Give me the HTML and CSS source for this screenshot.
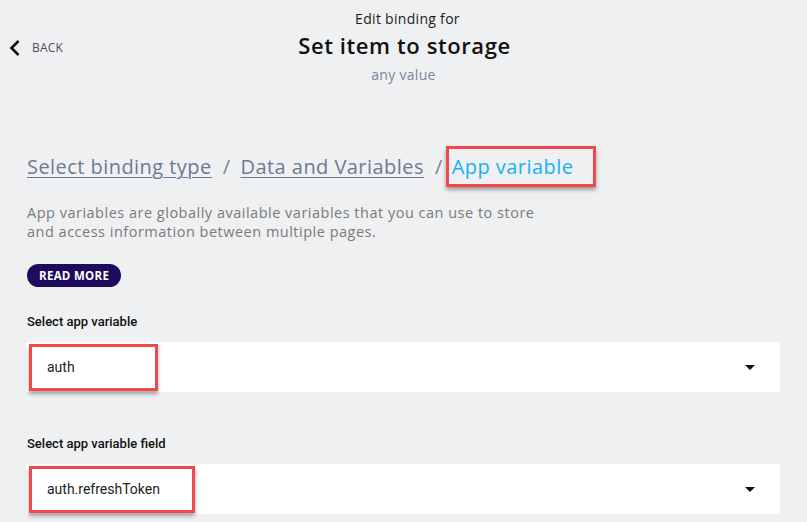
FILE: index.html
```html
<!DOCTYPE html>
<html>
<head>
<meta charset="utf-8">
<link rel="stylesheet" href="styles.css">
</head>
<body>
<div class="page">
  <header class="header">
    <a class="back">
      <svg class="chev" width="12" height="16" viewBox="0 0 12 16"><path d="M9.5 1 L2.5 8 L9.5 15" fill="none" stroke="#111" stroke-width="2.6"/></svg>
      <span>BACK</span>
    </a>
    <div class="titles">
      <div class="pre">Edit binding for</div>
      <div class="title">Set item to storage</div>
      <div class="sub">any value</div>
    </div>
  </header>
  <main class="content">
    <nav class="crumbs">
      <a class="crumb">Select binding type</a>
      <span class="sep">/</span>
      <a class="crumb">Data and Variables</a>
      <span class="sep">/</span>
      <span class="mark mark-crumb"><span class="current">App variable</span></span>
    </nav>
    <p class="desc">App variables are globally available variables that you can use to store and access information between multiple pages.</p>
    <button class="readmore">READ MORE</button>
    <label class="label">Select app variable</label>
    <div class="select">
      <span class="mark mark-val w1">auth</span>
      <span class="caret"></span>
    </div>
    <label class="label second">Select app variable field</label>
    <div class="select">
      <span class="mark mark-val w2">auth.refreshToken</span>
      <span class="caret"></span>
    </div>
  </main>
</div>
</body>
</html>
```
FILE: styles.css
```css
* { box-sizing: border-box; }
html, body { margin: 0; padding: 0; }
body {
  background: #eff0f2;
  font-family: "Open Sans", "Lato", sans-serif;
  width: 807px;
  height: 522px;
  overflow: hidden;
}
.header {
  position: relative;
  height: 100px;
}
.back {
  position: absolute;
  left: 9px;
  top: 39px;
  display: flex;
  align-items: center;
  gap: 11px;
  color: #4b4f5c;
  font-size: 12px;
  letter-spacing: 0.2px;
}
.titles {
  display: flex;
  flex-direction: column;
  align-items: center;
  padding-top: 9px;
}
.pre {
  font-size: 14px;
  letter-spacing: 0.3px;
  color: #1a1a1a;
  line-height: 20px;
  margin-left: 8px;
}
.title {
  font-size: 22px;
  letter-spacing: 0.6px;
  font-weight: 600;
  color: #111;
  line-height: 32px;
  margin-left: 2px;
}
.sub {
  font-size: 14px;
  letter-spacing: 0.3px;
  color: #7b8699;
  line-height: 20px;
  margin-top: 4px;
}
.content {
  padding: 46px 27px 0 27px;
}
.crumbs {
  display: flex;
  align-items: center;
  font-size: 20px;
  letter-spacing: 0.45px;
  color: #6f7a92;
  height: 41px;
}
.crumb {
  color: #6f7a92;
  text-decoration: underline;
  text-underline-offset: 3px;
  text-decoration-thickness: 1px;
}
.sep {
  margin: 0 10px 0 11px;
  color: #7a8294;
}
.mark {
  border: 3px solid #f2474b;
  box-shadow: 0 3px 4px rgba(0,0,0,0.35);
  display: inline-flex;
  align-items: center;
}
.mark-crumb {
  height: 41px;
  padding: 0 20px 0 3px;
  margin-left: -7px;
}
.current { color: #16b2f2; }
.desc {
  margin: 16px 0 0 0;
  width: 530px;
  font-size: 14.5px;
  letter-spacing: 0.5px;
  line-height: 19px;
  color: #7a7a7a;
}
.readmore {
  display: block;
  margin-top: 23px;
  height: 23px;
  padding: 0 12px;
  border: none;
  border-radius: 12px;
  background: #1e0b5e;
  color: #fff;
  font-family: "Open Sans", sans-serif;
  font-weight: 700;
  font-size: 11.5px;
  letter-spacing: 0.3px;
}
.label {
  display: block;
  margin-top: 26px;
  font-family: "Roboto", sans-serif;
  font-weight: 500;
  font-size: 13px;
  line-height: 18px;
  color: #111;
}
.label.second { margin-top: 43px; }
.select {
  margin-top: 11px;
  margin-left: -1px;
  width: 754px;
  height: 50px;
  background: #fff;
  display: flex;
  align-items: center;
  justify-content: space-between;
  padding: 0 25px 0 3px;
}
.mark-val {
  height: 47px;
  padding-left: 15px;
  font-family: "Roboto", sans-serif;
  font-size: 14px;
  color: #222;
}
.w1 { width: 129px; }
.w2 { width: 166px; }
.caret {
  width: 0;
  height: 0;
  border-left: 5px solid transparent;
  border-right: 5px solid transparent;
  border-top: 5px solid #111;
}
```
